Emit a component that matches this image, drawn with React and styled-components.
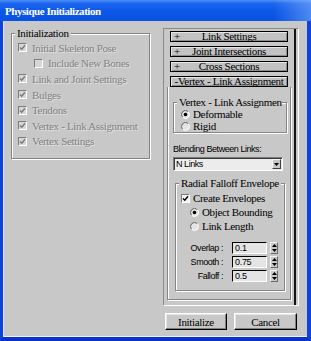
import React from "react";
import styled, { createGlobalStyle } from "styled-components";

const serif = `"Liberation Serif", "Times New Roman", serif`;
const sans = `"Liberation Sans", Arial, sans-serif`;

const GlobalStyle = createGlobalStyle`
  html, body {
    margin: 0;
    padding: 0;
    background: #ffffff;
  }
  body {
    font-family: ${serif};
  }
`;

const Window = styled.div`
  width: 311px;
  height: 341px;
  display: flex;
  flex-direction: column;
  background: #0b44dc;
`;

const TitleBar = styled.div`
  height: 21px;
  flex: none;
  display: flex;
  align-items: center;
  padding-left: 5px;
  background:
    linear-gradient(90deg, rgba(255, 255, 255, 0) 88%, rgba(160, 200, 255, 0.45) 100%),
    linear-gradient(180deg, #4b8ff8 0%, #1e66ee 16%, #0c58e8 50%, #0851e2 100%);
  color: #ffffff;
  font: bold 11px ${serif};
  letter-spacing: -0.45px;
`;

const Frame = styled.div`
  flex: 1;
  display: flex;
  align-items: flex-start;
  background: #c8c8c8;
  border-left: 3px solid #0b44dc;
  border-right: 4px solid #0b44dc;
  border-bottom: 4px solid #0834cc;
  box-shadow: inset 1px 0 0 #e4e4e4, inset 0 -1px 0 #f2f2f2;
`;

const LeftColumn = styled.div`
  margin-left: 8px;
  width: 139px;
`;

const RightColumn = styled.div`
  margin-left: 13px;
  margin-top: 7px;
  width: 136px;
`;

const Group = styled.div`
  box-sizing: border-box;
  width: ${(p) => p.$w}px;
  margin: ${(p) => p.$mt || 0}px 0 0 ${(p) => p.$ml || 0}px;
  padding: ${(p) => p.$pad};
  border: 1px solid #858585;
  box-shadow: inset 1px 1px 0 #ffffff, 1px 1px 0 #ffffff;
`;

const GroupTitle = styled.div`
  width: fit-content;
  max-width: ${(p) => p.$max || 200}px;
  margin: -7px 0 0 3px;
  padding: 0 2px;
  background: #c8c8c8;
  line-height: 12px;
  height: 12px;
  overflow: hidden;
  white-space: nowrap;
  font: 11px ${serif};
  letter-spacing: -0.33px;
  color: #000000;
`;

const OptionRow = styled.div`
  height: ${(p) => p.$h}px;
  display: flex;
  align-items: center;
  gap: ${(p) => p.$gap}px;
  padding-left: ${(p) => p.$indent || 0}px;
  font: 11px/12px ${serif};
  letter-spacing: -0.33px;
  white-space: nowrap;
  color: ${(p) => (p.$disabled ? "#828282" : "#000000")};
  text-shadow: ${(p) => (p.$disabled ? "1px 1px 0 rgba(255,255,255,0.5)" : "none")};
`;

const Box = styled.span`
  flex: none;
  box-sizing: border-box;
  width: 9px;
  height: 9px;
  display: flex;
  align-items: center;
  justify-content: center;
  border: 1px solid;
  border-color: #7c7c7c #ffffff #ffffff #7c7c7c;
  background: ${(p) => (p.$disabled ? "#d6d6d6" : "#f2f2f2")};
  text-shadow: none;
`;

const Check = ({ color }) => (
  <svg width="7" height="7" viewBox="0 0 7 7">
    <path d="M1 3.4 L2.8 5.2 L6 1.3" stroke={color} strokeWidth="1.4" fill="none" />
  </svg>
);

const CheckBox = ({ checked, disabled }) => (
  <Box $disabled={disabled}>
    {checked && <Check color={disabled ? "#7a7a7a" : "#000000"} />}
  </Box>
);

const Radio = ({ on }) => (
  <svg width="9" height="9" viewBox="0 0 9 9" style={{ flex: "none" }}>
    <circle cx="4.5" cy="4.5" r="4" fill="#e4e4e4" />
    <path d="M1.67 7.33 A4 4 0 0 1 7.33 1.67" stroke="#5e5e5e" fill="none" />
    <path d="M7.33 1.67 A4 4 0 0 1 1.67 7.33" stroke="#ffffff" fill="none" />
    {on && <circle cx="4.5" cy="4.5" r="1.8" fill="#000000" />}
  </svg>
);

const InitList = styled.div`
  padding: 1px 0 9px 6px;
`;

const Panel = styled.div`
  box-sizing: border-box;
  width: 136px;
  height: 278px;
  display: flex;
  padding: 2px 0 0 2px;
  border: 1px solid;
  border-color: #8a8a8a #ffffff #ffffff #8a8a8a;
`;

const RolloutColumn = styled.div`
  width: 126px;
  display: flex;
  flex-direction: column;
  gap: 4px;
`;

const RolloutHeader = styled.div`
  box-sizing: border-box;
  height: 11px;
  margin: 0 4px;
  display: grid;
  grid-template-columns: ${(p) => (p.$open ? "1fr" : "12px 1fr 12px")};
  align-items: center;
  border: 1px solid #000000;
  background: #c2c2c2;
  box-shadow: inset 1px 1px 0 #e6e6e6, inset -1px -1px 0 #8c8c8c;
  font: 11px/9px ${serif};
  letter-spacing: -0.33px;
  color: #000000;
  white-space: nowrap;
  text-align: center;
`;

const Plus = styled.span`
  text-align: left;
  padding-left: 3px;
`;

const Rollout = styled.div`
  display: flex;
  flex-direction: column;
`;

const RolloutBody = styled.div`
  box-sizing: border-box;
  width: 124px;
  margin-left: 1px;
  padding: 15px 0 8px 5px;
  border: 1px solid #858585;
  border-top: none;
  box-shadow: inset 1px 0 0 #ffffff, 1px 1px 0 #ffffff;
`;

const RadioList = styled.div`
  padding-left: 7px;
`;

const SmallLabel = styled.div`
  margin-top: 11px;
  height: 11px;
  font: 9px/11px ${sans};
  letter-spacing: -0.45px;
  color: #000000;
  white-space: nowrap;
`;

const Dropdown = styled.div`
  box-sizing: border-box;
  width: 110px;
  height: 14px;
  margin-top: 2px;
  display: flex;
  align-items: center;
  justify-content: space-between;
  padding: 0 1px 0 2px;
  border: 1px solid;
  border-color: #7a7a7a #ffffff #ffffff #7a7a7a;
  box-shadow: inset 1px 1px 0 #3a3a3a;
  background: #ececec;
  font: 9px/11px ${sans};
  letter-spacing: -0.45px;
  color: #000000;
`;

const DropButton = styled.span`
  box-sizing: border-box;
  width: 9px;
  height: 10px;
  display: flex;
  align-items: center;
  justify-content: center;
  background: #c8c8c8;
  border: 1px solid;
  border-color: #f4f4f4 #404040 #404040 #f4f4f4;
`;

const EnvelopeList = styled.div`
  padding: 2px 0 7px 5px;
`;

const SpinnerList = styled.div`
  margin-top: 8px;
`;

const SpinRow = styled.div`
  height: 14px;
  display: flex;
  align-items: center;
`;

const SpinLabel = styled.span`
  width: 42px;
  text-align: right;
  font: 9px/11px ${sans};
  letter-spacing: -0.45px;
  color: #000000;
  white-space: nowrap;
`;

const SpinField = styled.span`
  box-sizing: border-box;
  width: 35px;
  height: 12px;
  margin-left: 9px;
  padding-left: 2px;
  border: 1px solid;
  border-color: #000000 #ffffff #ffffff #000000;
  background: #e4e4e4;
  font: 9px/10px ${sans};
  letter-spacing: -0.3px;
  color: #000000;
`;

const SpinArrows = styled.span`
  box-sizing: border-box;
  width: 8px;
  height: 12px;
  margin-left: 3px;
  display: flex;
  flex-direction: column;
  align-items: center;
  justify-content: center;
  gap: 2px;
  border: 1px solid;
  border-color: #f4f4f4 #6a6a6a #6a6a6a #f4f4f4;
`;

const ScrollTrack = styled.div`
  width: 6px;
  margin-top: -2px;
  display: flex;
`;

const ScrollThumb = styled.div`
  width: 2px;
  height: 276px;
  margin-left: 2px;
  background: #141414;
`;

const ButtonRow = styled.div`
  display: flex;
  gap: 7px;
  margin: 7px 0 0 2px;
`;

const Button = styled.div`
  box-sizing: border-box;
  width: ${(p) => p.$w}px;
  height: 17px;
  display: flex;
  align-items: center;
  justify-content: center;
  border: 1px solid;
  border-color: #ffffff #000000 #000000 #ffffff;
  box-shadow: inset -1px -1px 0 #808080, inset 1px 1px 0 #e6e6e6;
  background: #c8c8c8;
  font: 11px/12px ${serif};
  letter-spacing: -0.33px;
  color: #000000;
`;

const Triangle = ({ dir }) => (
  <svg width="5" height="3" viewBox="0 0 5 3">
    <polygon points={dir === "up" ? "2.5,0 5,3 0,3" : "0,0 5,0 2.5,3"} fill="#000000" />
  </svg>
);

const initItems = [
  { label: "Initial Skeleton Pose", checked: true },
  { label: "Include New Bones", checked: false, indent: 16 },
  { label: "Link and Joint Settings", checked: true },
  { label: "Bulges", checked: true },
  { label: "Tendons", checked: true },
  { label: "Vertex - Link Assignment", checked: true },
  { label: "Vertex Settings", checked: true },
];

const spinners = [
  { label: "Overlap :", value: "0.1" },
  { label: "Smooth :", value: "0.75" },
  { label: "Falloff :", value: "0.5" },
];

export default function App() {
  return (
    <>
      <GlobalStyle />
      <Window>
        <TitleBar>Physique Initialization</TitleBar>
        <Frame>
          <LeftColumn>
            <Group $w={139} $mt={12}>
              <GroupTitle>Initialization</GroupTitle>
              <InitList>
                {initItems.map((item) => (
                  <OptionRow key={item.label} $h={15.6} $gap={5} $indent={item.indent} $disabled>
                    <CheckBox checked={item.checked} disabled />
                    {item.label}
                  </OptionRow>
                ))}
              </InitList>
            </Group>
          </LeftColumn>

          <RightColumn>
            <Panel>
              <RolloutColumn>
                <RolloutHeader>
                  <Plus>+</Plus>
                  <span>Link Settings</span>
                </RolloutHeader>
                <RolloutHeader>
                  <Plus>+</Plus>
                  <span>Joint Intersections</span>
                </RolloutHeader>
                <RolloutHeader>
                  <Plus>+</Plus>
                  <span>Cross Sections</span>
                </RolloutHeader>
                <Rollout>
                  <RolloutHeader $open>-Vertex - Link Assignment</RolloutHeader>
                  <RolloutBody>
                    <Group $w={114}>
                      <GroupTitle $max={101}>Vertex - Link Assignment</GroupTitle>
                      <RadioList>
                        <OptionRow $h={12} $gap={3}>
                          <Radio on />
                          Deformable
                        </OptionRow>
                        <OptionRow $h={12} $gap={3}>
                          <Radio />
                          Rigid
                        </OptionRow>
                      </RadioList>
                    </Group>

                    <SmallLabel>Blending Between Links:</SmallLabel>
                    <Dropdown>
                      <span>N Links</span>
                      <DropButton>
                        <Triangle dir="down" />
                      </DropButton>
                    </Dropdown>

                    <Group $w={110} $mt={12} $ml={2}>
                      <GroupTitle>Radial Falloff Envelope</GroupTitle>
                      <EnvelopeList>
                        <OptionRow $h={14} $gap={3}>
                          <CheckBox checked />
                          Create Envelopes
                        </OptionRow>
                        <OptionRow $h={14} $gap={3} $indent={9}>
                          <Radio on />
                          Object Bounding
                        </OptionRow>
                        <OptionRow $h={14} $gap={3} $indent={9}>
                          <Radio />
                          Link Length
                        </OptionRow>
                        <SpinnerList>
                          {spinners.map((s) => (
                            <SpinRow key={s.label}>
                              <SpinLabel>{s.label}</SpinLabel>
                              <SpinField>{s.value}</SpinField>
                              <SpinArrows>
                                <Triangle dir="up" />
                                <Triangle dir="down" />
                              </SpinArrows>
                            </SpinRow>
                          ))}
                        </SpinnerList>
                      </EnvelopeList>
                    </Group>
                  </RolloutBody>
                </Rollout>
              </RolloutColumn>
              <ScrollTrack>
                <ScrollThumb />
              </ScrollTrack>
            </Panel>
            <ButtonRow>
              <Button $w={62}>Initialize</Button>
              <Button $w={63}>Cancel</Button>
            </ButtonRow>
          </RightColumn>
        </Frame>
      </Window>
    </>
  );
}
